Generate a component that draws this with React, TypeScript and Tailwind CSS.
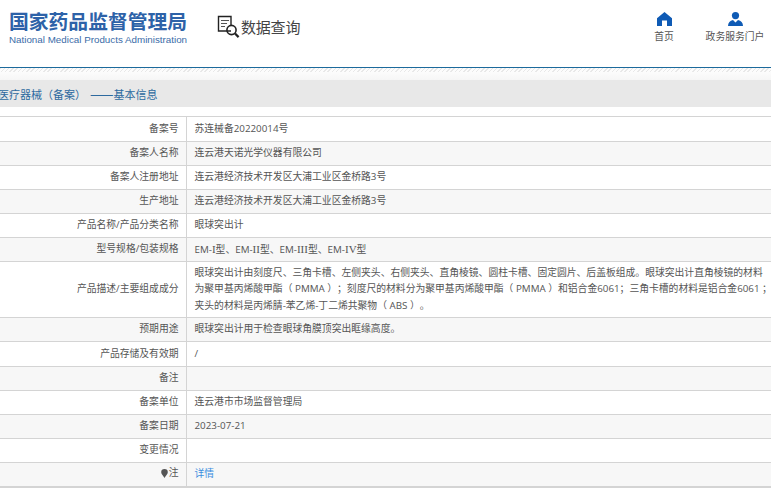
const Rn = ({ n }: { n: string }) => <span className="font-['Liberation_Serif',serif] text-[11px]">{n}</span>;

const rows = [
  { label: "备案号", value: "苏连械备20220014号", rowH: "h-[25px]" },
  { label: "备案人名称", value: "连云港天诺光学仪器有限公司" },
  { label: "备案人注册地址", value: "连云港经济技术开发区大浦工业区金桥路3号" },
  { label: "生产地址", value: "连云港经济技术开发区大浦工业区金桥路3号" },
  { label: "产品名称/产品分类名称", value: "眼球突出计" },
  {
    label: "型号规格/包装规格",
    value: (
      <>
        EM-<Rn n="I" />型、EM-<Rn n="II" />型、EM-<Rn n="III" />型、EM-<Rn n="IV" />型
      </>
    ),
  },
  {
    label: "产品描述/主要组成成分",
    lines: [
      "眼球突出计由刻度尺、三角卡槽、左侧夹头、右侧夹头、直角棱镜、圆柱卡槽、固定圆片、后盖板组成。眼球突出计直角棱镜的材料",
      "为聚甲基丙烯酸甲酯（ PMMA ）；刻度尺的材料分为聚甲基丙烯酸甲酯（ PMMA ）和铝合金6061；三角卡槽的材料是铝合金6061 ；",
      "夹头的材料是丙烯腈-苯乙烯-丁二烯共聚物（ ABS ）。",
    ],
    rowH: "h-[56px]",
  },
  { label: "预期用途", value: "眼球突出计用于检查眼球角膜顶突出眶缘高度。" },
  { label: "产品存储及有效期", value: "/", rowH: "h-[25px]" },
  { label: "备注", value: "" },
  { label: "备案单位", value: "连云港市市场监督管理局" },
  { label: "备案日期", value: "2023-07-21" },
  { label: "变更情况", value: "" },
];

function DocSearchIcon() {
  return (
    <svg width="24" height="24" viewBox="0 0 24 24" fill="none" stroke="#222" className="shrink-0">
      <path d="M14 16H1.500V1.500H14V10" strokeWidth="1.400" />
      <path d="M4 5.500h8M4 8.500h6M4 11.500h4" strokeWidth="1.200" stroke="#555" />
      <circle cx="14.500" cy="15" r="4.600" strokeWidth="1.600" />
      <path d="M18 18.500l3.600 3.600" strokeWidth="2.200" />
    </svg>
  );
}

function HomeIcon() {
  return (
    <svg width="15" height="14" viewBox="0 0 15 14" fill="#0f5bb5">
      <path d="M7.500 0L15 6.200V14H10V8.600H5V14H0V6.200z" />
    </svg>
  );
}

function UserIcon() {
  return (
    <svg width="15" height="14" viewBox="0 0 15 14" fill="#0f5bb5">
      <circle cx="7.500" cy="3.600" r="3.600" />
      <path d="M0 14C0 10.500 2 8.600 5 8L7.500 10.400 10 8C13 8.600 15 10.500 15 14z" />
    </svg>
  );
}

export default function App() {
  return (
    <div className="w-[771px] h-[494px] overflow-hidden bg-white text-[#555] [text-spacing-trim:space-all] font-['Open_Sans','Noto_Sans_CJK_SC',sans-serif]">
      <header className="h-[67px] flex items-start border-b border-[#1c6a9c] box-content">
        <div className="w-[206px] pl-[9px] pt-[9px] shrink-0">
          <div className="text-[19.800px] leading-[24px] font-bold text-[#2d62a8] whitespace-nowrap font-['Noto_Sans_CJK_SC',sans-serif]">
            国家药品监督管理局
          </div>
          <div className="mt-[1px] text-[9.800px] leading-[12px] text-[#3a6ca8] whitespace-nowrap font-['Liberation_Sans',sans-serif]">
            National Medical Products Administration
          </div>
        </div>
        <div className="flex items-center ml-[11px] mt-[15px] text-[#444]">
          <DocSearchIcon />
          <span className="text-[15px] leading-[22px] -tracking-[0.200px] whitespace-nowrap font-['Noto_Sans_CJK_SC',sans-serif]">数据查询</span>
        </div>
        <nav className="ml-auto flex text-[#555] text-[9.800px]">
          <div className="flex flex-col items-center w-[22px] pt-[12px] mr-[30px]">
            <HomeIcon />
            <span className="mt-[4px] leading-[14px] whitespace-nowrap">首页</span>
          </div>
          <div className="flex flex-col items-center w-[60px] pt-[12px] mr-[6px]">
            <UserIcon />
            <span className="mt-[4px] leading-[14px] whitespace-nowrap">政务服务门户</span>
          </div>
        </nav>
      </header>

      <div className="h-[4px] bg-[repeating-linear-gradient(135deg,#e8e8e8_0,#e8e8e8_1px,#fcfcfc_1px,#fcfcfc_3px)]" />
      <div className="h-[8px] bg-gradient-to-b from-[#fcfcfc] to-[#f6f6f6]" />

      <div className="h-[27px] bg-[#e8e8e8] flex items-center pt-[2px] text-[11px] text-[#2d6a9f] whitespace-nowrap">
        <div className="-ml-[2px]">
          医疗器械（备案）<span className="ml-[4px] text-[14px] leading-none font-['Noto_Sans_CJK_SC',sans-serif]">——</span>基本信息
        </div>
      </div>

      <table className="mt-[9px] w-full border-collapse border-b-2 border-[#d4d4d4] text-[9.800px] table-fixed">
        <colgroup>
          <col className="w-[186px]" />
          <col />
        </colgroup>
        <tbody>
          {rows.map((r, i) => (
            <tr key={r.label} className={i % 2 === 1 ? "bg-[#f7f7f7]" : "bg-white"}>
              <td className={`border-y border-r border-[#d4d4d4] pr-[7px] text-right py-0 align-middle whitespace-nowrap ${r.rowH ?? "h-[24px]"}`}>
                {r.label}
              </td>
              <td className="border-y border-[#d4d4d4] pl-[8px] py-0 align-middle leading-[16.500px] whitespace-nowrap">
                {r.lines ? r.lines.map((l) => <div key={l}>{l}</div>) : r.value}
              </td>
            </tr>
          ))}
          <tr className="bg-[#f7f7f7]">
            <td className="border-y border-r border-[#d4d4d4] pr-[7px] text-right h-[24px] py-0 align-middle">
              <span className="inline-flex items-center gap-[1px]">
                <svg width="7" height="9" viewBox="0 0 7 9" fill="#555">
                  <path d="M3.500 0a3.300 3.300 0 0 1 3.300 3.300c0 2.100-2.200 3.600-3.300 5.700C2.400 6.900.2 5.400.2 3.300A3.300 3.300 0 0 1 3.500 0z" />
                </svg>
                注
              </span>
            </td>
            <td className="border-y border-[#d4d4d4] pl-[8px] h-[24px] py-0 align-middle text-[#3b8ee0]">详情</td>
          </tr>
        </tbody>
      </table>
    </div>
  );
}
